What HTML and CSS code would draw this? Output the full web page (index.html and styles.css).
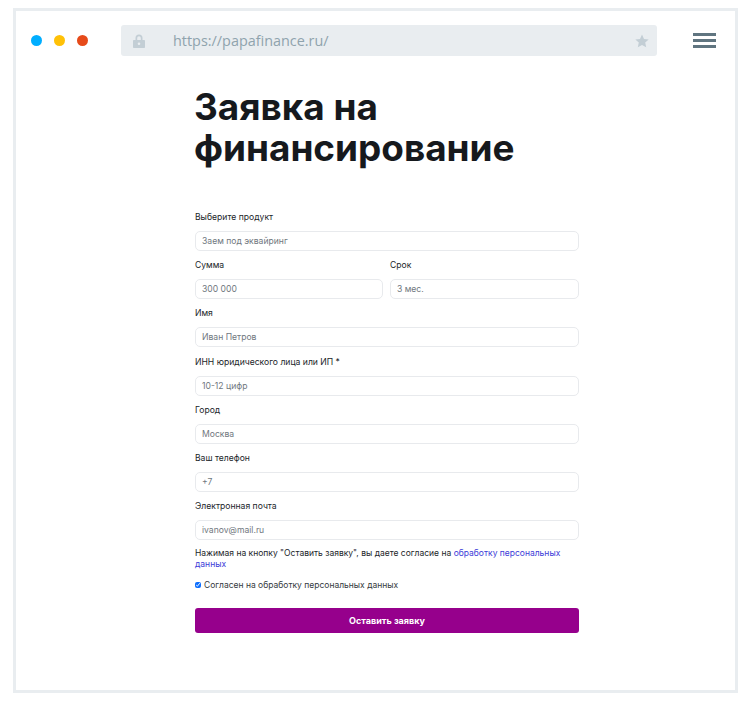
FILE: index.html
```html
<!DOCTYPE html>
<html lang="ru">
<head>
  <meta charset="UTF-8" />
  <meta name="viewport" content="width=device-width, initial-scale=1.0"/>
  <title>Заявка на финансирование</title>
  <link rel="stylesheet" href="styles.css">
</head>
<body>
  <div class="browser">
    <div class="topbar">
      <div class="dots">
        <span class="dot dot-blue"></span>
        <span class="dot dot-yellow"></span>
        <span class="dot dot-red"></span>
      </div>
      <div class="address">
        <svg class="lock" viewBox="0 0 12 14" width="12" height="14">
          <path fill="#c3ced5" fill-rule="evenodd" d="M2.500 6V4a3.500 3.500 0 0 1 7 0v2h1.700c.5 0 .8.3.8.8v6.400c0 .5-.3.8-.8.8H.8c-.5 0-.8-.3-.8-.8V6.800c0-.5.3-.8.8-.8zm1.700 0h3.600V4a1.800 1.800 0 0 0-3.600 0zM6 8.500a1.300 1.300 0 1 0 0 2.600 1.300 1.300 0 0 0 0-2.600z"/>
        </svg>
        <span class="url">https://papafinance.ru/</span>
        <svg class="star" viewBox="0 0 14 14" width="14" height="14">
          <path fill="#c3ced5" d="M7 .5l2 4.400 4.700.5-3.500 3.200 1 4.700L7 10.900l-4.200 2.400 1-4.700L.3 5.400 5 4.900z"/>
        </svg>
      </div>
      <div class="burger"><span></span><span></span><span></span></div>
    </div>

    <main class="content">
      <h1>Заявка на финансирование</h1>
      <form class="form">
        <div class="field">
          <label>Выберите продукт</label>
          <input type="text" placeholder="Заем под эквайринг">
        </div>
        <div class="row">
          <div class="field">
            <label>Сумма</label>
            <input type="text" placeholder="300 000">
          </div>
          <div class="field">
            <label>Срок</label>
            <input type="text" placeholder="3 мес.">
          </div>
        </div>
        <div class="field">
          <label>Имя</label>
          <input type="text" placeholder="Иван Петров">
        </div>
        <div class="field">
          <label>ИНН юридического лица или ИП *</label>
          <input type="text" placeholder="10-12 цифр">
        </div>
        <div class="field">
          <label>Город</label>
          <input type="text" placeholder="Москва">
        </div>
        <div class="field">
          <label>Ваш телефон</label>
          <input type="text" placeholder="+7">
        </div>
        <div class="field">
          <label>Электронная почта</label>
          <input type="text" placeholder="ivanov@mail.ru">
        </div>
        <p class="note">Нажимая на кнопку "Оставить заявку", вы даете согласие на <a href="#">обработку персональных данных</a></p>
        <label class="agree"><input type="checkbox" checked> Согласен на обработку персональных данных</label>
        <button type="button" class="submit">Оставить заявку</button>
      </form>
    </main>
  </div>
</body>
</html>
```

FILE: styles.css
```css
*, *::before, *::after { box-sizing: border-box; margin: 0; padding: 0; }
body { background: #fff; padding: 8px 13px; font-family: 'Inter', sans-serif; color: #212529; }

.browser { width: 725px; height: 685px; border: 3px solid #e9edf0; }

.topbar { display: flex; align-items: center; height: 31px; margin-top: 14px; padding-left: 15px; }
.dots { display: flex; gap: 12px; width: 90px; }
.dot { width: 11px; height: 11px; border-radius: 50%; }
.dot-blue { background: #00aeff; }
.dot-yellow { background: #ffc107; }
.dot-red { background: #e64a19; }

.address { display: flex; align-items: center; width: 536px; height: 31px; padding: 0 8px 0 12px; background: #e9edf0; border-radius: 3px; }
.url { flex: 1; margin-left: 28px; font-family: 'Open Sans', sans-serif; font-size: 14.400px; color: #8fa3ad; }

.burger { display: flex; flex-direction: column; gap: 3px; width: 23px; margin-left: 36px; }
.burger span { height: 3px; background: #607580; }

.content { width: 384px; margin-left: 179px; }
h1 { margin-top: 30px; margin-left: -1px; font-size: 36.900px; line-height: 41px; font-weight: 700; color: #16191d; }

.form { margin-top: 42px; }
.field { flex: 1; margin-bottom: 7.200px; }
.field label { display: block; height: 13px; padding-top: 1px; margin-bottom: 8px; font-size: 8.600px; line-height: 13px; color: #212529; }
.field input { display: block; width: 100%; height: 20px; padding: 0 6px; border: 1px solid #e8eaed; border-radius: 5px; font-family: inherit; font-size: 8.600px; }
.field input::placeholder { color: #70777e; }
.row { display: grid; grid-template-columns: 188px 1fr; gap: 7px; }

.note { font-size: 8.500px; line-height: 11px; margin-top: 8px; color: #212529; }
.note a { color: #3b3bd8; text-decoration: none; }
.agree { display: flex; align-items: center; gap: 3px; margin-top: 10px; font-size: 8.500px; color: #343a40; }
.agree input { width: 6px; height: 6px; accent-color: #0d6efd; }

.submit { display: block; width: 100%; height: 25.500px; margin-top: 17.500px; background: #96008c; border: none; border-radius: 3px; color: #fff; font-family: inherit; font-size: 9px; font-weight: 700; }
```
